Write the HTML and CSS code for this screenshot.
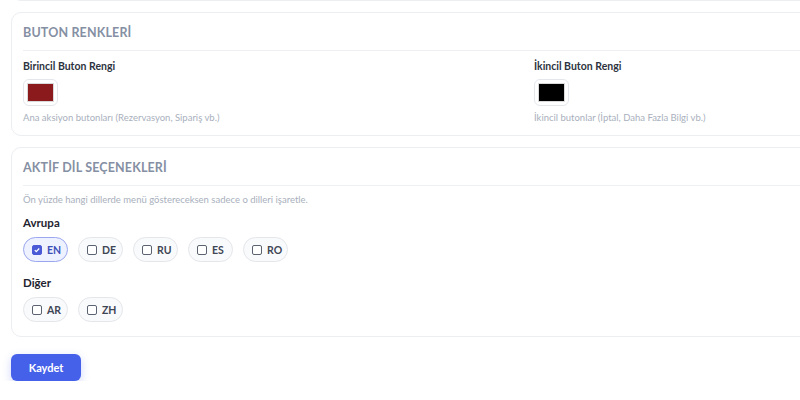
FILE: index.html
```html
<!DOCTYPE html>
<html lang="tr">
<head>
    <meta charset="UTF-8">
    <meta name="viewport" content="width=device-width, initial-scale=1.0">
    <title>Tema Ayarları</title>
    <link rel="stylesheet" href="styles.css">
</head>
<body>
    <div class="page">
        <div class="card card-prev"></div>

        <div class="card">
            <h3 class="card-title">BUTON RENKLERİ</h3>
            <div class="color-grid">
                <div class="color-field">
                    <label class="field-label">Birincil Buton Rengi</label>
                    <div class="swatch"><span class="swatch-fill primary"></span></div>
                    <p class="help">Ana aksiyon butonları (Rezervasyon, Sipariş vb.)</p>
                </div>
                <div class="color-field">
                    <label class="field-label">İkincil Buton Rengi</label>
                    <div class="swatch"><span class="swatch-fill secondary"></span></div>
                    <p class="help">İkincil butonlar (İptal, Daha Fazla Bilgi vb.)</p>
                </div>
            </div>
        </div>

        <div class="card">
            <h3 class="card-title">AKTİF DİL SEÇENEKLERİ</h3>
            <p class="help desc">Ön yüzde hangi dillerde menü göstereceksen sadece o dilleri işaretle.</p>

            <div class="group-label">Avrupa</div>
            <div class="chips">
                <label class="chip active"><span class="box checked"><svg viewBox="0 0 10 10"><path d="M2.2 5.2l1.9 1.9 3.7-4"/></svg></span>EN</label>
                <label class="chip"><span class="box"></span>DE</label>
                <label class="chip"><span class="box"></span>RU</label>
                <label class="chip"><span class="box"></span>ES</label>
                <label class="chip"><span class="box"></span>RO</label>
            </div>

            <div class="group-label">Diğer</div>
            <div class="chips">
                <label class="chip"><span class="box"></span>AR</label>
                <label class="chip"><span class="box"></span>ZH</label>
            </div>
        </div>

        <button class="save-btn">Kaydet</button>
    </div>
</body>
</html>
```

FILE: styles.css
```css
* {
    margin: 0;
    padding: 0;
    box-sizing: border-box;
}

body {
    font-family: Lato, "Noto Sans", sans-serif;
    background: #ffffff;
    color: #1f2937;
    overflow: hidden;
}

.page {
    width: 1040px;
    padding: 0 0 0 11px;
    display: flex;
    flex-direction: column;
    align-items: flex-start;
    margin-top: -40px;
}

.card {
    width: 1024px;
    background: #ffffff;
    border: 1px solid #eceef2;
    border-radius: 10px;
    padding: 0 11px 11px 11px;
    margin-bottom: 11px;
}

.card-prev {
    height: 41px;
}

.card-title {
    font-size: 12.5px;
    line-height: 20px;
    font-weight: 700;
    letter-spacing: 0.15px;
    color: #858fa3;
    padding: 10px 0 7px;
    border-bottom: 1px solid #eef0f3;
    margin-bottom: 8px;
}

.color-grid {
    display: grid;
    grid-template-columns: 511px 1fr;
}

.field-label {
    display: block;
    font-size: 10.5px;
    line-height: 14px;
    font-weight: 700;
    color: #2d3340;
    margin-bottom: 6px;
}

.swatch {
    width: 35px;
    height: 27px;
    border: 1px solid #e3e6eb;
    border-radius: 6px;
    padding: 3px;
    margin-bottom: 6px;
}

.swatch-fill {
    display: block;
    width: 100%;
    height: 100%;
    border: 1px solid #d9d9d9;
}

.swatch-fill.primary {
    background: #8b1a1d;
}

.swatch-fill.secondary {
    background: #000000;
}

.help {
    font-size: 9.5px;
    color: #a9b0bd;
    line-height: 12px;
}

.desc {
    margin-bottom: 9px;
}

.group-label {
    font-size: 11.5px;
    line-height: 16px;
    font-weight: 700;
    color: #1f2430;
    margin-bottom: 6px;
}

.chips {
    display: flex;
    gap: 10px;
    margin-bottom: 13px;
}

.chips:last-child {
    margin-bottom: 3px;
}

.chip {
    display: flex;
    align-items: center;
    gap: 5px;
    height: 25px;
    width: 45px;
    padding-left: 8px;
    border: 1px solid #e4e6ea;
    border-radius: 13px;
    background: #f9fafb;
    font-size: 10.5px;
    font-weight: 700;
    color: #3f4654;
}

.chip.active {
    background: #eef1ff;
    border-color: #9aa6ee;
    color: #3d4fb8;
}

.box {
    width: 10px;
    height: 10px;
    border: 1px solid #5b6270;
    border-radius: 2px;
    background: #ffffff;
    display: flex;
}

.box.checked {
    background: #4a5ad6;
    border-color: #4a5ad6;
}

.box svg {
    width: 100%;
    height: 100%;
    fill: none;
    stroke: #ffffff;
    stroke-width: 1.6;
}

.save-btn {
    margin-top: 6px;
    width: 70px;
    height: 27px;
    background: #4561ea;
    color: #ffffff;
    border: none;
    border-radius: 6px;
    font-family: inherit;
    font-size: 11px;
    font-weight: 700;
    box-shadow: 0 3px 8px rgba(69, 97, 234, 0.25);
    cursor: pointer;
}
```
